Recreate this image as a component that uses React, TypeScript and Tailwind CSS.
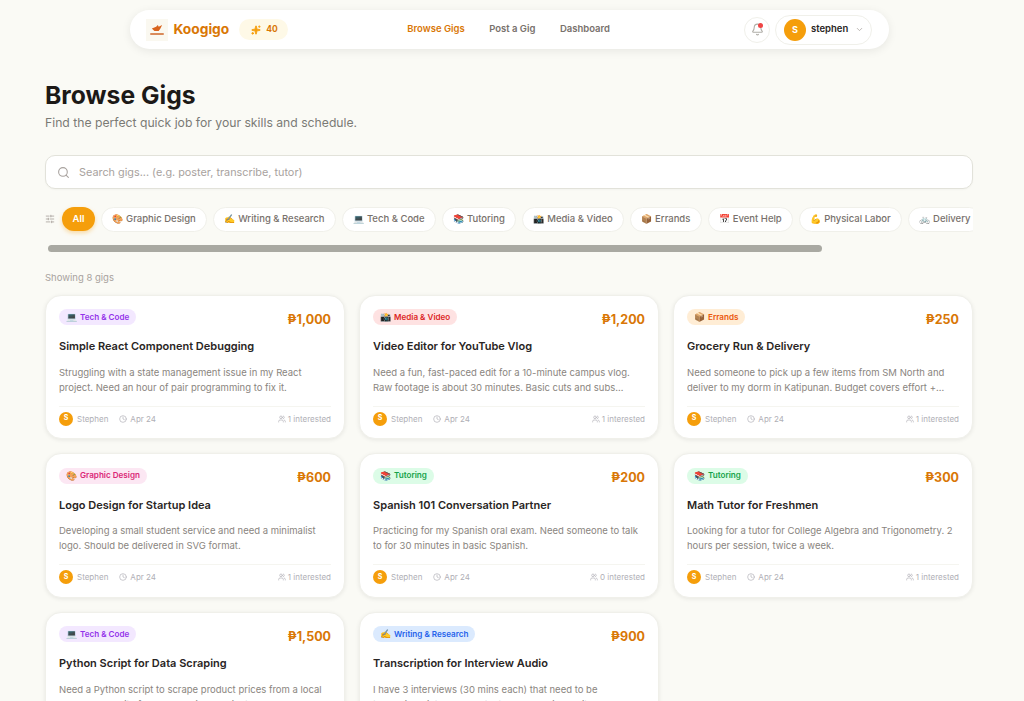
import { Bell, ChevronDown, Clock, Search, SlidersHorizontal, Sparkles, Users } from "lucide-react";

const cats = [
  ["🎨", "Graphic Design"],
  ["✍️", "Writing & Research"],
  ["💻", "Tech & Code"],
  ["📚", "Tutoring"],
  ["📸", "Media & Video"],
  ["📦", "Errands"],
  ["📅", "Event Help"],
  ["💪", "Physical Labor"],
  ["🚲", "Delivery"],
];

const styles: Record<string, string> = {
  tech: "bg-[#f3e8ff] text-[#9333ea]",
  media: "bg-[#fee2e2] text-[#dc2626]",
  errands: "bg-[#ffedd5] text-[#ea580c]",
  design: "bg-[#fce7f3] text-[#db2777]",
  tutoring: "bg-[#dcfce7] text-[#16a34a]",
  writing: "bg-[#dbeafe] text-[#2563eb]",
};

const gigs = [
  { k: "tech", e: "💻", c: "Tech & Code", p: "₱1,000", t: "Simple React Component Debugging", d: "Struggling with a state management issue in my React project. Need an hour of pair programming to fix it.", n: 1 },
  { k: "media", e: "📸", c: "Media & Video", p: "₱1,200", t: "Video Editor for YouTube Vlog", d: "Need a fun, fast-paced edit for a 10-minute campus vlog. Raw footage is about 30 minutes. Basic cuts and subs needed for the final upload.", n: 1 },
  { k: "errands", e: "📦", c: "Errands", p: "₱250", t: "Grocery Run & Delivery", d: "Need someone to pick up a few items from SM North and deliver to my dorm in Katipunan. Budget covers effort + transportation costs.", n: 1 },
  { k: "design", e: "🎨", c: "Graphic Design", p: "₱600", t: "Logo Design for Startup Idea", d: "Developing a small student service and need a minimalist logo. Should be delivered in SVG format.", n: 1 },
  { k: "tutoring", e: "📚", c: "Tutoring", p: "₱200", t: "Spanish 101 Conversation Partner", d: "Practicing for my Spanish oral exam. Need someone to talk to for 30 minutes in basic Spanish.", n: 0 },
  { k: "tutoring", e: "📚", c: "Tutoring", p: "₱300", t: "Math Tutor for Freshmen", d: "Looking for a tutor for College Algebra and Trigonometry. 2 hours per session, twice a week.", n: 1 },
  { k: "tech", e: "💻", c: "Tech & Code", p: "₱1,500", t: "Python Script for Data Scraping", d: "Need a Python script to scrape product prices from a local e-commerce site for a comparison project.", n: 1 },
  { k: "writing", e: "✍️", c: "Writing & Research", p: "₱900", t: "Transcription for Interview Audio", d: "I have 3 interviews (30 mins each) that need to be transcribed into Tagalog text. Clean audio quality.", n: 1 },
];

function Logo() {
  return (
    <div className="flex h-[22px] w-[22px] flex-col items-center justify-center bg-[#faf8f0]">
      <svg width="12" height="8" viewBox="0 0 14 9">
        <path d="M1 5 L6 3 L8 1 L9 3 L13 1 L11 5 L9 8 L4 8 Z" fill="#d9641e" />
      </svg>
      <div className="mt-[1px] h-[2px] w-[14px] rounded-sm bg-[#d98a5a]" />
    </div>
  );
}

function Card({ g }: { g: (typeof gigs)[number] }) {
  return (
    <div className="flex h-[144.5px] flex-col rounded-2xl border border-[#f0f0ea] bg-white px-[13px] pt-[13.5px] shadow-[0_1px_4px_rgba(0,0,0,0.08)]">
      <div className="flex h-[20px] items-start justify-between">
        <span className={`flex h-[16px] items-center gap-[4px] rounded-full px-[7px] text-[8.1px] font-semibold ${styles[g.k]}`}>
          <span className="w-[10px] text-[9px]">{g.e}</span>
          {g.c}
        </span>
        <span className="mt-[1.5px] text-[12.5px] font-bold leading-[18px] text-[#d97706]">{g.p}</span>
      </div>
      <h3 className="mt-[9px] truncate text-[11px] font-semibold leading-[16px] text-[#292524]">{g.t}</h3>
      <p className="mt-[10.5px] line-clamp-2 h-[31px] text-[9.5px] leading-[15.4px] text-[#8a8580]">{g.d}</p>
      <div className="mt-[10px] flex items-center border-t border-[#f5f5f0] pt-[5px] text-[8px] text-[#b0afb6]">
        <span className="flex h-[14px] w-[14px] items-center justify-center rounded-full bg-[#f59e0b] text-[7px] font-bold text-white">S</span>
        <span className="ml-[4px]">Stephen</span>
        <Clock className="ml-[11px] h-[8px] w-[8px]" />
        <span className="ml-[3px]">Apr 24</span>
        <Users className="ml-auto h-[8px] w-[8px]" />
        <span className="ml-[2px]">{g.n} interested</span>
      </div>
    </div>
  );
}

export default function App() {
  return (
    <div className="h-[701px] overflow-hidden bg-[#fafaf5] font-['Inter',sans-serif]">
      <div className="w-[1019px] pt-[10px]">
        <header className="mx-auto flex h-[39px] w-[759px] items-center rounded-full bg-white pl-[16px] pr-[17px] shadow-[0_2px_10px_rgba(0,0,0,0.08)]">
          <Logo />
          <span className="ml-[5.5px] text-[13.75px] font-bold text-[#d97706]">Koogigo</span>
          <span className="ml-[10px] flex h-[21px] items-center gap-[5px] rounded-full bg-[#fef9e7] pl-[12px] pr-[10px] text-[8.5px] font-bold text-[#d97706]">
            <Sparkles className="h-[10px] w-[10px] fill-[#f59e0b] text-[#f59e0b]" />
            40
          </span>
          <nav className="ml-[119.5px] flex gap-[24.5px] text-[9.5px] font-semibold text-[#78716c]">
            <span className="text-[#d97706]">Browse Gigs</span>
            <span>Post a Gig</span>
            <span>Dashboard</span>
          </nav>
          <div className="relative ml-auto flex h-[26px] w-[26px] items-center justify-center rounded-full border border-[#f0f0ea]">
            <Bell className="h-[13px] w-[13px] text-[#b0aea8]" />
            <span className="absolute right-[6px] top-[5px] h-[5px] w-[5px] rounded-full bg-[#ef4444]" />
          </div>
          <div className="ml-[5px] flex h-[30px] w-[97px] items-center rounded-full border border-[#f0f0ea] pl-[8px]">
            <span className="flex h-[22px] w-[22px] items-center justify-center rounded-full bg-[#f59e0b] text-[9px] font-bold text-white">S</span>
            <span className="ml-[5px] text-[9.5px] font-semibold text-[#292524]">stephen</span>
            <ChevronDown className="ml-[7px] h-[9px] w-[9px] text-[#a8a29e]" />
          </div>
        </header>
      </div>

      <main className="w-[1018px] px-[45px] pt-[30px]">
        <h1 className="text-[24.7px] font-bold leading-[32px] text-[#1c1917]">Browse Gigs</h1>
        <p className="mt-[3px] text-[12.2px] leading-[18px] text-[#7a7a75]">Find the perfect quick job for your skills and schedule.</p>

        <div className="mt-[23px] flex h-[34px] items-center rounded-[10px] border border-[#e2e2da] bg-white pl-[11px] shadow-[0_1px_2px_rgba(0,0,0,0.03)]">
          <Search className="h-[13px] w-[13px] text-[#a8a29e]" />
          <span className="ml-[9px] text-[10.85px] text-[#a8a29e]">Search gigs... (e.g. poster, transcribe, tutor)</span>
        </div>

        <div className="mt-[17px] flex h-[26px] items-center">
          <SlidersHorizontal className="h-[10px] w-[10px] shrink-0 text-[#a8a29e]" />
          <span className="ml-[6.5px] flex h-[24px] shrink-0 items-center rounded-full bg-[#f59e0b] px-[11px] text-[9.5px] font-semibold text-white shadow-[0_2px_4px_rgba(245,158,11,0.35)]">All</span>
          <div className="ml-[5.5px] flex min-w-0 flex-1 gap-[6px] overflow-hidden">
            {cats.map(([e, c]) => (
              <span key={c} className="flex h-[25px] shrink-0 items-center gap-[4px] rounded-full border border-[#f0f0ea] bg-white px-[10.2px] text-[9.5px] font-medium text-[#78716c]">
                <span className="w-[10px] text-[9px]">{e}</span>
                {c}
              </span>
            ))}
          </div>
        </div>

        <div className="ml-[3px] mt-[13px] h-[7px] w-[774px] rounded-full bg-[#a9a9a2]" />

        <p className="mt-[19px] text-[9.5px] leading-[14px] text-[#a8a29e]">Showing 8 gigs</p>

        <div className="mt-[9.5px] grid grid-cols-3 gap-[14px]">
          {gigs.map((g) => (
            <Card key={g.t} g={g} />
          ))}
        </div>
      </main>
    </div>
  );
}
